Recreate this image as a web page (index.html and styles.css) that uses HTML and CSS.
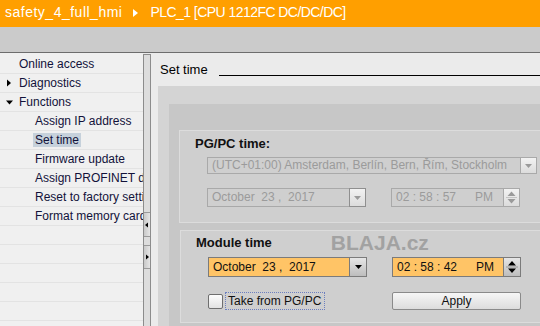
FILE: index.html
```html
<!DOCTYPE html>
<html lang="en">
<head>
    <meta charset="UTF-8">
    <title>Set time</title>
    <link rel="stylesheet" href="styles.css">
</head>
<body>
    <div class="titlebar">
        <span class="project">safety_4_full_hmi</span>
        <svg class="crumb" width="5" height="8" viewBox="0 0 5 8"><path d="M0 0 L5 4 L0 8 Z" fill="#fff"/></svg>
        <span class="device">PLC_1 [CPU 1212FC DC/DC/DC]</span>
    </div>
    <div class="toolbar"></div>

    <div class="main">
        <div class="nav">
            <div class="row">Online access</div>
            <div class="row twisty"><svg class="tw" width="13" height="18" viewBox="0 0 13 18"><path d="M1 5.5 L5 9 L1 12.5 Z" fill="#000"/></svg>Diagnostics</div>
            <div class="row twisty"><svg class="tw" width="13" height="18" viewBox="0 0 13 18"><path d="M0 7.5 L7 7.5 L3.5 11.5 Z" fill="#000"/></svg>Functions</div>
            <div class="row sub">Assign IP address</div>
            <div class="row sub"><span class="sel">Set time</span></div>
            <div class="row sub">Firmware update</div>
            <div class="row sub">Assign PROFINET device name</div>
            <div class="row sub">Reset to factory settings</div>
            <div class="row sub">Format memory card</div>
            <div class="row"></div>
            <div class="row"></div>
            <div class="row"></div>
            <div class="row"></div>
            <div class="row"></div>
            <div class="row"></div>
        </div>

        <div class="splitter">
            <div class="split-btn first">
                <svg width="6" height="6" viewBox="0 0 6 6"><path d="M4 0.5 L1 3 L4 5.5 Z" fill="#000"/></svg>
            </div>
            <div class="split-btn second">
                <svg width="6" height="6" viewBox="0 0 6 6"><path d="M2 0.5 L5 3 L2 5.5 Z" fill="#000"/></svg>
            </div>
        </div>

        <div class="content">
            <div class="head">
                <span>Set time</span>
                <div class="rule"></div>
            </div>
            <div class="panel">
                <div class="inner">
                    <div class="group">
                        <div class="group-title">PG/PC time:</div>
                        <div class="combo">
                            <div class="val">(UTC+01:00) Amsterdam, Berlín, Bern, Řím, Stockholm</div>
                            <div class="drop">
                                <svg width="7" height="4" viewBox="0 0 7 4"><path d="M0 0 L7 0 L3.5 4 Z" fill="#9a9a9a"/></svg>
                            </div>
                        </div>
                        <div class="fields disabled">
                            <div class="date">
                                <div class="val">October  23 ,  2017</div>
                                <div class="drop">
                                    <svg width="7" height="4" viewBox="0 0 7 4"><path d="M0 0 L7 0 L3.5 4 Z" fill="#9a9a9a"/></svg>
                                </div>
                            </div>
                            <div class="time">
                                <div class="val">02 : 58 : 57<span class="ampm">PM</span></div>
                                <div class="spin">
                                    <svg width="15" height="17" viewBox="0 0 15 17"><path d="M3.5 7 L11.5 7 L7.5 2.5 Z M3.5 10 L11.5 10 L7.5 14.5 Z" fill="#9a9a9a"/><path d="M2 8.5 H13" stroke="#c4c4c4"/></svg>
                                </div>
                            </div>
                        </div>
                    </div>

                    <div class="group second">
                        <div class="group-title">Module time<span class="watermark">BLAJA.cz</span></div>
                        <div class="fields active">
                            <div class="date">
                                <div class="val">October  23 ,  2017</div>
                                <div class="drop">
                                    <svg width="7" height="4" viewBox="0 0 7 4"><path d="M0 0 L7 0 L3.5 4 Z" fill="#000"/></svg>
                                </div>
                            </div>
                            <div class="time">
                                <div class="val">02 : 58 : 42<span class="ampm">PM</span></div>
                                <div class="spin">
                                    <svg width="16" height="18" viewBox="0 0 16 18"><path d="M4 7.5 L12 7.5 L8 3 Z M4 10.5 L12 10.5 L8 15 Z" fill="#000"/><path d="M2 9 H14" stroke="#9a9a9a"/></svg>
                                </div>
                            </div>
                        </div>
                        <div class="check-row">
                            <div class="check-cell">
                                <div class="checkbox"></div>
                                <div class="check-label">Take from PG/PC</div>
                            </div>
                            <div class="button">Apply</div>
                        </div>
                    </div>
                </div>
            </div>
        </div>
    </div>
</body>
</html>
```

FILE: styles.css
```css
body {
    margin: 0;
    width: 540px;
    height: 326px;
    overflow: hidden;
    font-family: "Liberation Sans", Arial, sans-serif;
    font-size: 12px;
    background-color: #ebebeb;
}
.titlebar {
    height: 27px;
    box-sizing: border-box;
    padding: 4px 0 0 5px;
    line-height: 16px;
    background-color: #ff9f00;
    color: #fff;
    font-size: 14px;
    white-space: nowrap;
    display: flex;
    align-items: flex-start;
}
.project {
    letter-spacing: 0.5px;
}
.crumb {
    margin: 5px 12px 0 11px;
}
.device {
    letter-spacing: -0.55px;
}
.toolbar {
    height: 25px;
    background-color: #cbcbcb;
    border-bottom: 1px solid #6d6d6d;
}
.main {
    display: flex;
    height: 273px;
}

/* left tree */
.nav {
    width: 143px;
    padding-top: 2px;
    background-color: #f0f0f0;
    overflow: hidden;
    white-space: nowrap;
}
.row {
    height: 18px;
    line-height: 18px;
    padding-left: 19px;
    border-bottom: 1px solid #e3e3e3;
    color: #12123a;
}
.row.twisty {
    padding-left: 6px;
    display: flex;
}
.row.sub {
    padding-left: 35px;
}
.sel {
    display: inline-block;
    line-height: 14px;
    padding: 0 2px;
    margin-left: -2px;
    background-color: #c6d1db;
}

/* splitter */
.splitter {
    width: 6px;
    margin-top: 1px;
    background-color: #dddddd;
    border: 1px solid #8c8c8c;
    border-bottom: none;
}
.split-btn {
    display: flex;
    align-items: center;
    justify-content: center;
    background: linear-gradient(to right, #c9c9c9, #e6e6e6);
    border-top: 1px solid #9a9a9a;
    border-bottom: 1px solid #9a9a9a;
}
.split-btn.first {
    height: 23px;
    margin-top: 157px;
}
.split-btn.second {
    height: 22px;
    margin-top: 8px;
}

/* right side */
.content {
    flex: 1;
    display: flex;
    flex-direction: column;
    overflow: hidden;
    background-color: #ebebeb;
}
.head {
    flex-shrink: 0;
    height: 33px;
    display: flex;
    align-items: center;
    padding-left: 9px;
    font-size: 13px;
    color: #000;
}
.rule {
    flex: 1;
    align-self: flex-start;
    margin: 22px 0 0 11px;
    border-top: 1px solid #000;
}
.panel {
    flex: 1;
    min-height: 0;
    margin-left: 7px;
    padding: 18px 0 0 11px;
    background-color: #d4d4d4;
}
.inner {
    height: 100%;
    box-sizing: border-box;
    padding: 26px 0 0 10px;
    background-color: #c7c7c7;
}
.group {
    height: 86px;
    margin-bottom: 7px;
    padding: 5px 0 0 15px;
    background-color: #cfcfcf;
    border: 1px solid #dcdcdc;
    border-right: none;
}
.group.second {
    height: 87px;
    padding-top: 4px;
    margin-left: 1px;
}
.group-title {
    height: 15px;
    line-height: 15px;
    font-size: 13px;
    font-weight: bold;
    color: #111;
    display: flex;
}
.watermark {
    margin-left: 59px;
    font-size: 21px;
    line-height: 15px;
    color: #a2a2a2;
}

/* inputs */
.combo {
    display: flex;
    width: 330px;
    height: 17px;
    box-sizing: border-box;
    margin: 6px 0 0 12px;
    border: 1px solid #a9a9a9;
}
.val {
    flex: 1;
    padding-left: 4px;
    white-space: pre;
    overflow: hidden;
}
.combo .val {
    line-height: 15px;
    color: #9b9b9b;
}
.drop {
    width: 15px;
    display: flex;
    align-items: center;
    justify-content: center;
    border-left: 1px solid #a9a9a9;
    background: linear-gradient(#f2f2f2, #dcdcdc);
}
.fields {
    display: flex;
    margin-left: 12px;
}
.fields.disabled {
    margin-top: 14px;
    height: 19px;
}
.fields.active {
    margin-top: 7px;
    height: 20px;
}
.date, .time {
    display: flex;
    box-sizing: border-box;
    border: 1px solid #a9a9a9;
}
.date {
    width: 159px;
}
.time {
    width: 129px;
    margin-left: 25px;
}
.disabled .val {
    color: #9b9b9b;
    line-height: 17px;
}
.disabled .date .drop {
    width: 15px;
    border: 1px solid #8f8f8f;
    margin: -1px -1px -1px 0;
}
.spin {
    width: 15px;
    display: flex;
    align-items: center;
    justify-content: center;
    border-left: 1px solid #a9a9a9;
    background: linear-gradient(#f2f2f2, #dcdcdc);
}
.ampm {
    margin-left: 19px;
}
.active .date, .active .time {
    border-color: #7b7b7b;
}
.active .val {
    background-color: #ffc466;
    color: #111;
    line-height: 18px;
}
.active .drop, .active .spin {
    width: 16px;
    border-left: 1px solid #7b7b7b;
    background: linear-gradient(#e6e6e6, #bdbdbd);
}

.check-row {
    display: flex;
    align-items: center;
    height: 18px;
    margin: 15px 0 0 12px;
}
.check-cell {
    width: 184px;
    display: flex;
    align-items: center;
}
.checkbox {
    width: 13px;
    height: 13px;
    border: 1px solid #6f6f6f;
    border-radius: 2px;
    background: linear-gradient(#fdfdfd, #e2e2e2);
}
.check-label {
    margin-left: 2px;
    height: 16px;
    line-height: 16px;
    padding: 0 3px 0 2px;
    border: 1px dotted #6c7fbf;
    color: #111;
}
.button {
    width: 129px;
    height: 18px;
    box-sizing: border-box;
    line-height: 16px;
    text-align: center;
    border: 1px solid #8a8a8a;
    border-radius: 2px;
    background: linear-gradient(#f6f6f6, #dcdcdc);
    color: #111;
}
```
